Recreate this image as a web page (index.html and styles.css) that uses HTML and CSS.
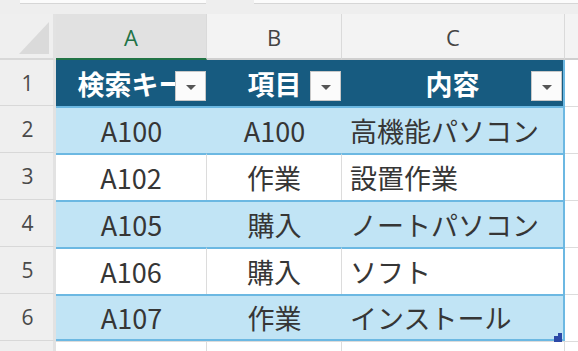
FILE: index.html
```html
<!DOCTYPE html>
<html lang="ja">
<head>
<meta charset="utf-8">
<link rel="stylesheet" href="styles.css">
</head>
<body>
<div class="sheet">
  <div class="topstrip"><span class="tb tb1"></span><span class="tb tb2"></span></div>

  <div class="corner"><svg width="34" height="36" viewBox="0 0 34 36"><polygon points="2,34 32,34 32,2" fill="#dadada"/></svg></div>
  <div class="colhead sel">A</div>
  <div class="colhead">B</div>
  <div class="colhead">C</div>
  <div class="colhead extra"></div>

  <div class="rowhead">1</div>
  <div class="th c-a">検索キー<span class="filter"><i></i></span></div>
  <div class="th c-b">項目<span class="filter"><i></i></span></div>
  <div class="th c-c">内容<span class="filter"><i></i></span></div>
  <div class="out head"></div>

  <div class="rowhead">2</div>
  <div class="td band c-a">A100</div>
  <div class="td band c-b">A100</div>
  <div class="td band c-c">高機能パソコン</div>
  <div class="out"></div>

  <div class="rowhead">3</div>
  <div class="td c-a line">A102</div>
  <div class="td c-b line">作業</div>
  <div class="td c-c">設置作業</div>
  <div class="out"></div>

  <div class="rowhead">4</div>
  <div class="td band c-a">A105</div>
  <div class="td band c-b">購入</div>
  <div class="td band c-c">ノートパソコン</div>
  <div class="out"></div>

  <div class="rowhead">5</div>
  <div class="td c-a line">A106</div>
  <div class="td c-b line">購入</div>
  <div class="td c-c">ソフト</div>
  <div class="out"></div>

  <div class="rowhead">6</div>
  <div class="td band c-a last">A107</div>
  <div class="td band c-b last">作業</div>
  <div class="td band c-c last">インストール<span class="handle"><i></i></span></div>
  <div class="out"></div>

  <div class="rowhead tail"></div>
  <div class="empty line"></div>
  <div class="empty line"></div>
  <div class="empty line"></div>
  <div class="empty"></div>
</div>
</body>
</html>
```

FILE: styles.css
```css
html, body {
  margin: 0;
  padding: 0;
  background: #ffffff;
}
.sheet {
  width: 578px;
  height: 351px;
  overflow: hidden;
  display: grid;
  grid-template-columns: 56px 151px 135px 223px 1fr;
  grid-template-rows: 14px 46px 46px repeat(5, 47px) 1fr;
  font-family: "Noto Sans CJK JP", "Noto Sans", sans-serif;
  color: #363636;
}
.topstrip {
  grid-column: 1 / -1;
  background: #eeeeee;
  display: flex;
  gap: 48px;
  padding-left: 20px;
  align-items: flex-start;
}
.tb {
  display: block;
  height: 3px;
  background: #fbfbfb;
  border-bottom: 1px solid #d6d6d6;
}
.tb1 { width: 186px; }
.tb2 { flex: 1; }
.corner {
  background: #efefef;
  border-right: 3px solid #e2e2e2;
  border-bottom: 2px solid #d8d8d8;
  display: flex;
  align-items: flex-end;
  justify-content: flex-end;
  padding: 0 2px 2px 0;
  box-sizing: border-box;
}
.corner svg { display: block; }
.colhead {
  background: #f3f3f3;
  border-right: 1px solid #dadada;
  border-bottom: 2px solid #cfcfcf;
  box-sizing: border-box;
  display: flex;
  align-items: center;
  justify-content: center;
  font-family: "Open Sans", "Noto Sans", sans-serif;
  font-size: 22px;
  color: #444444;
  padding-top: 2px;
}
.colhead.sel {
  background: #e1e1e1;
  color: #217346;
  border-bottom: 2px solid #217346;
}
.colhead.extra {
  border-right: none;
}
.rowhead {
  background: #efefef;
  border-right: 3px solid #e2e2e2;
  border-bottom: 1px solid #d8d8d8;
  box-sizing: border-box;
  display: flex;
  align-items: center;
  justify-content: center;
  font-family: "Open Sans", "Noto Sans", sans-serif;
  font-size: 21px;
  color: #4a4a4a;
  padding-left: 2px;
}
.rowhead.tail { border-bottom: none; }
.th {
  position: relative;
  background: #175b80;
  color: #ffffff;
  font-weight: 700;
  font-size: 27px;
  display: flex;
  align-items: center;
  justify-content: center;
  overflow: hidden;
  white-space: nowrap;
}
.th.c-c { border-right: 2px solid #6cb8e2; }
.filter {
  position: absolute;
  right: 1px;
  top: 11px;
  width: 31px;
  height: 30px;
  box-sizing: border-box;
  background: #fbfbfb;
  border: 1px solid #c8c8c8;
  display: flex;
  align-items: center;
  justify-content: center;
}
.filter i {
  display: block;
  width: 0;
  height: 0;
  border-left: 5px solid transparent;
  border-right: 5px solid transparent;
  border-top: 5px solid #555555;
  margin-top: 2px;
}
.td {
  position: relative;
  background: #ffffff;
  border-top: 2px solid #6cb8e2;
  box-sizing: border-box;
  display: flex;
  align-items: center;
  justify-content: center;
  font-size: 27px;
  white-space: nowrap;
  padding-bottom: 1px;
}
.td.band { background: #c1e4f5; }
.td.line { border-right: 1px solid #dcdcdc; }
.td.c-c {
  justify-content: flex-start;
  padding-left: 8px;
  border-right: 2px solid #6cb8e2;
}
.td.last {
  border-bottom: 2px solid #6cb8e2;
  padding-bottom: 0;
}
.handle {
  position: absolute;
  right: 1px;
  bottom: -3px;
  width: 8px;
  height: 6px;
  background: #2c48a6;
}
.handle i {
  position: absolute;
  right: 0;
  top: -3px;
  width: 4px;
  height: 3px;
  background: #2c48a6;
}
.out {
  background: #ffffff;
  border-top: 1px solid #dcdcdc;
}
.out.head { border-top: none; }
.empty {
  background: #ffffff;
  border-top: 1px solid #dcdcdc;
}
.empty.line { border-right: 1px solid #dcdcdc; }
```
